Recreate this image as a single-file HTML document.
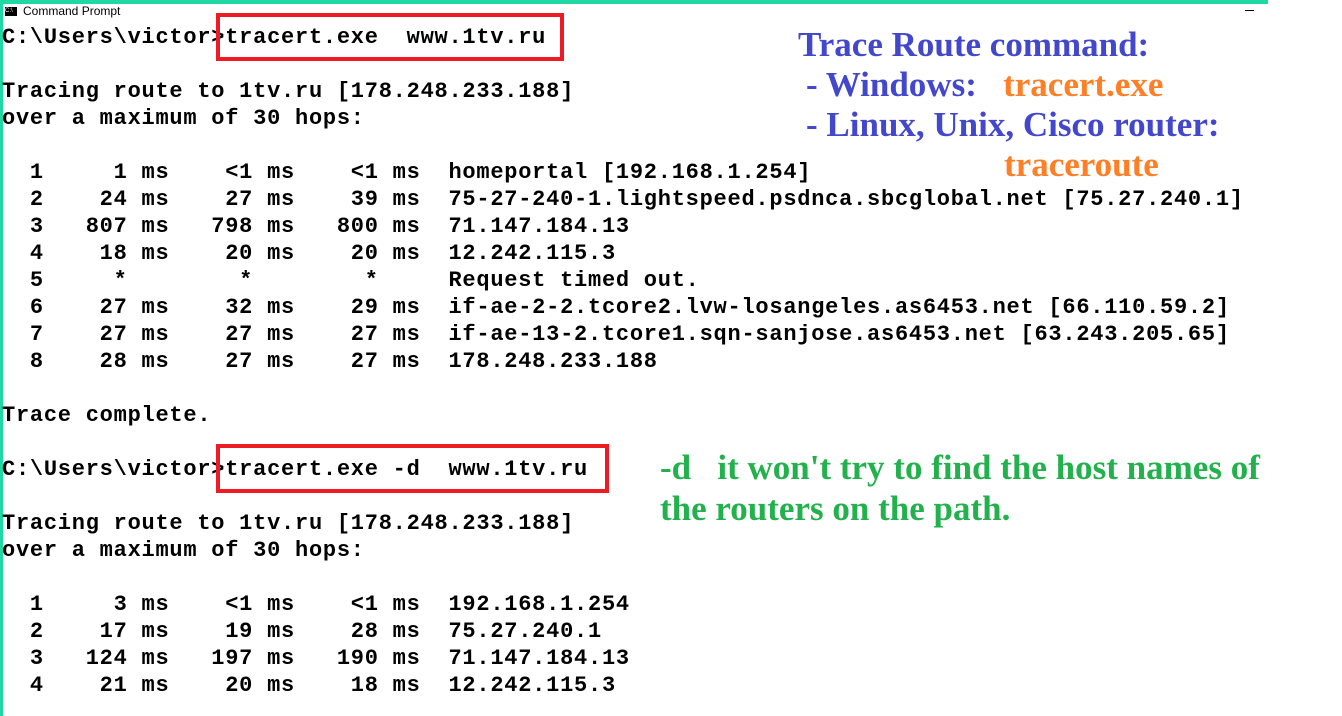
<!DOCTYPE html>
<html><head><meta charset="utf-8"><style>
html,body{margin:0;padding:0;width:1342px;height:716px;overflow:hidden;background:#fff;position:relative}
.tb{position:absolute;left:0;top:0;width:1268px;height:4px;background:#1fd8a4}
.lb{position:absolute;left:0;top:0;width:3px;height:716px;background:#1fd8a4}
pre{position:absolute;left:2px;top:24px;margin:0;font-family:"Liberation Mono",monospace;font-weight:bold;font-size:22px;letter-spacing:0.75px;line-height:27px;color:#000}
.box{position:absolute;border:4px solid #ed1c24}
.s{position:absolute;font-family:"Liberation Serif",serif;font-weight:bold;font-size:35px;line-height:40px;white-space:pre}
.b{color:#4347cc}.o{color:#ff7f27}.g{color:#22b14c}
</style></head><body>
<div class="tb"></div><div class="lb"></div>
<div style="position:absolute;left:5px;top:7px;width:12px;height:9px;background:#000;color:#fff;font:6px 'Liberation Sans',sans-serif;line-height:9px">C:\</div>
<div style="position:absolute;left:23px;top:4px;font:12px 'Liberation Sans',sans-serif;color:#000">Command Prompt</div>
<div style="position:absolute;left:1245px;top:10px;width:9px;height:1px;background:#000"></div>
<pre>C:\Users\victor>tracert.exe  www.1tv.ru

Tracing route to 1tv.ru [178.248.233.188]
over a maximum of 30 hops:

  1     1 ms    &lt;1 ms    &lt;1 ms  homeportal [192.168.1.254]
  2    24 ms    27 ms    39 ms  75-27-240-1.lightspeed.psdnca.sbcglobal.net [75.27.240.1]
  3   807 ms   798 ms   800 ms  71.147.184.13
  4    18 ms    20 ms    20 ms  12.242.115.3
  5     *        *        *     Request timed out.
  6    27 ms    32 ms    29 ms  if-ae-2-2.tcore2.lvw-losangeles.as6453.net [66.110.59.2]
  7    27 ms    27 ms    27 ms  if-ae-13-2.tcore1.sqn-sanjose.as6453.net [63.243.205.65]
  8    28 ms    27 ms    27 ms  178.248.233.188

Trace complete.

C:\Users\victor>tracert.exe -d  www.1tv.ru

Tracing route to 1tv.ru [178.248.233.188]
over a maximum of 30 hops:

  1     3 ms    &lt;1 ms    &lt;1 ms  192.168.1.254
  2    17 ms    19 ms    28 ms  75.27.240.1
  3   124 ms   197 ms   190 ms  71.147.184.13
  4    21 ms    20 ms    18 ms  12.242.115.3</pre>
<div class="box" style="left:216px;top:13px;width:340px;height:40px"></div>
<div class="box" style="left:216px;top:444px;width:385px;height:41px"></div>
<div class="s b" style="left:798px;top:25px">Trace Route command:</div>
<div class="s b" style="left:806px;top:65px">- Windows:   <span class="o">tracert.exe</span></div>
<div class="s b" style="left:806px;top:105px">- Linux, Unix, Cisco router:</div>
<div class="s o" style="left:1004px;top:145px">traceroute</div>
<div class="s g" style="left:660px;top:448px">-d   it won't try to find the host names of</div>
<div class="s g" style="left:660px;top:489px">the routers on the path.</div>
</body></html>
